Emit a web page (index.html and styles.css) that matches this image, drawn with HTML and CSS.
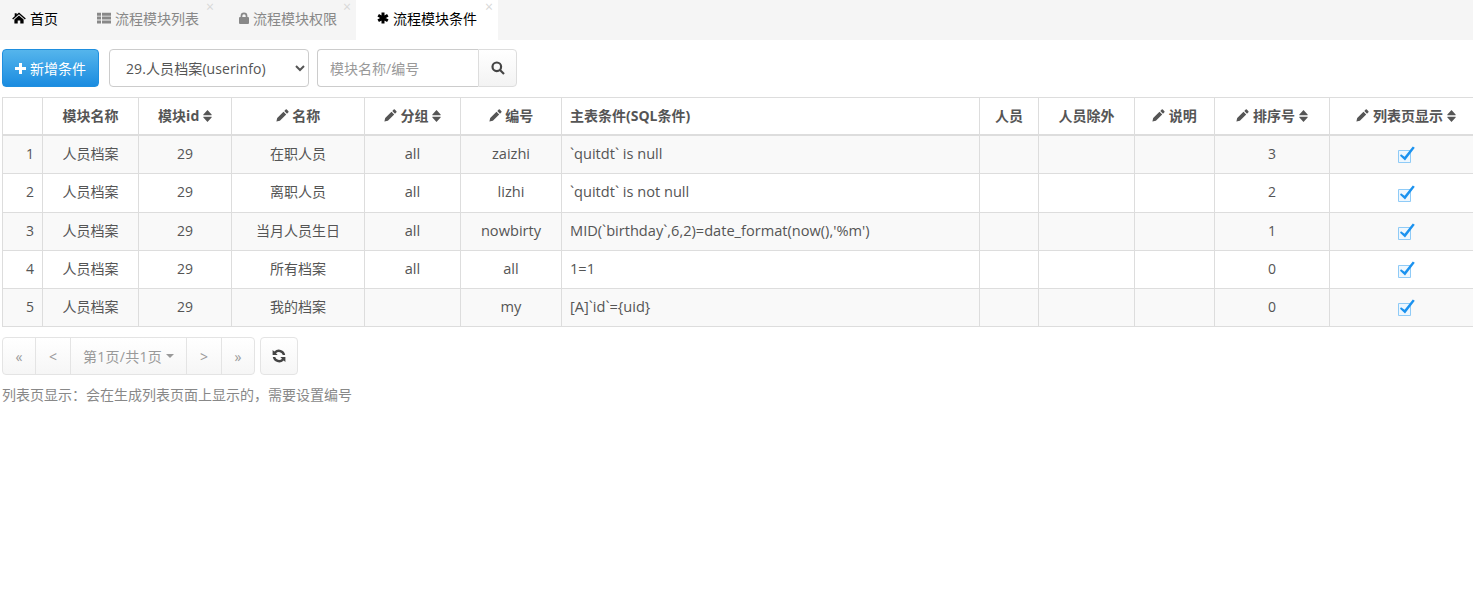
FILE: index.html
```html
<!DOCTYPE html>
<html lang="zh">
<head>
<meta charset="utf-8">
<title>流程模块条件</title>
<link rel="stylesheet" href="styles.css">
</head>
<body>
<svg class="defs" width="0" height="0" aria-hidden="true">
  <defs>
    <symbol id="i-pencil" viewBox="0 0 13 13"><path d="M9.700.6a.8.8 0 0 1 1.100 0l1.600 1.600a.8.8 0 0 1 0 1.100L11 4.700 8.300 2 9.700.6zM7.500 2.800l2.700 2.700-6.300 6.300-3.500.8.800-3.500 6.300-6.300z"/></symbol>
    <symbol id="i-sort" viewBox="0 0 9 12"><path d="M4.500 0 8.600 4.400c.3.400.1.800-.4.800H.8c-.5 0-.7-.4-.4-.8L4.500 0zM4.500 12 .4 7.600c-.3-.4-.1-.8.4-.8h7.400c.5 0 .7.400.4.800L4.500 12z"/></symbol>
    <symbol id="i-check" viewBox="0 0 18 18"><path class="box" d="M1.500 4.500h12v12h-12z"/><path class="tick" d="M4 8.200 7.600 10.800 15.800.4l2 1.400L8 14.600 3 9.800z"/></symbol>
  </defs>
</svg>

<nav class="tabs">
  <div class="tab tab-home">
    <svg class="ti" viewBox="0 0 14 12"><path d="M7 .4 13.800 6.500l-.9 1L7 2.300 1.100 7.500l-.9-1 2.500-2.200V1.200h2v1.400L7 .4zM7 3.400l4.600 4v4.200H8.300V8.400H5.700v3.200H2.400V7.400L7 3.400z"/></svg>
    <span>首页</span>
  </div>
  <div class="tab tab-muted tab-list">
    <svg class="ti" viewBox="0 0 14 12"><path d="M0 .8h4v3H0zM5 .8h9v3H5zM0 4.600h4v3H0zM5 4.600h9v3H5zM0 8.400h4v3H0zM5 8.400h9v3H5z"/></svg>
    <span>流程模块列表</span><i class="close">×</i>
  </div>
  <div class="tab tab-muted tab-lock">
    <svg class="ti ti-lock" viewBox="0 0 10 12"><path d="M5 .5a3.400 3.400 0 0 1 3.400 3.400V5H9a1 1 0 0 1 1 1v5a1 1 0 0 1-1 1H1a1 1 0 0 1-1-1V6a1 1 0 0 1 1-1h.6V3.900A3.400 3.400 0 0 1 5 .5zm0 1.700A1.700 1.700 0 0 0 3.300 3.900V5h3.400V3.900A1.700 1.700 0 0 0 5 2.200z"/></svg>
    <span>流程模块权限</span><i class="close">×</i>
  </div>
  <div class="tab tab-active">
    <svg class="ti ti-star" viewBox="0 0 12 12"><path d="M6 .5v11M1.200 3.200l9.600 5.600M10.800 3.200l-9.600 5.600"/></svg>
    <span>流程模块条件</span><i class="close">×</i>
  </div>
</nav>

<main class="content">
  <div class="toolbar">
    <button class="btn-primary" type="button">
      <svg class="plus" viewBox="0 0 11 11"><path d="M4 0h3v4h4v3H7v4H4V7H0V4h4z"/></svg>新增条件
    </button>
    <select class="select">
      <option>29.人员档案(userinfo)</option>
    </select>
    <div class="search">
      <input class="search-input" type="text" placeholder="模块名称/编号">
      <button class="search-btn" type="button" aria-label="搜索">
        <svg viewBox="0 0 14 14"><circle cx="5.800" cy="5.800" r="4.300"/><path d="m9 9 4 4"/></svg>
      </button>
    </div>
  </div>

  <div class="table-wrap">
    <table class="grid">
      <colgroup>
        <col class="c1"><col class="c2"><col class="c3"><col class="c4"><col class="c5"><col class="c6"><col class="c7"><col class="c8"><col class="c9"><col class="c10"><col class="c11"><col class="c12">
      </colgroup>
      <thead>
        <tr>
          <th></th>
          <th>模块名称</th>
          <th>模块id <svg class="sort"><use href="#i-sort"/></svg></th>
          <th><svg class="pen"><use href="#i-pencil"/></svg> 名称</th>
          <th><svg class="pen"><use href="#i-pencil"/></svg> 分组 <svg class="sort"><use href="#i-sort"/></svg></th>
          <th><svg class="pen"><use href="#i-pencil"/></svg> 编号</th>
          <th class="left">主表条件(SQL条件)</th>
          <th>人员</th>
          <th>人员除外</th>
          <th><svg class="pen"><use href="#i-pencil"/></svg> 说明</th>
          <th><svg class="pen"><use href="#i-pencil"/></svg> 排序号 <svg class="sort"><use href="#i-sort"/></svg></th>
          <th><svg class="pen"><use href="#i-pencil"/></svg> 列表页显示 <svg class="sort"><use href="#i-sort"/></svg></th>
        </tr>
      </thead>
      <tbody>
        <tr>
          <td class="num">1</td><td>人员档案</td><td>29</td><td>在职人员</td><td class="latin">all</td><td class="latin">zaizhi</td>
          <td class="left latin">`quitdt` is null</td><td></td><td></td><td></td><td>3</td>
          <td><svg class="chk"><use href="#i-check"/></svg></td>
        </tr>
        <tr>
          <td class="num">2</td><td>人员档案</td><td>29</td><td>离职人员</td><td class="latin">all</td><td class="latin">lizhi</td>
          <td class="left latin">`quitdt` is not null</td><td></td><td></td><td></td><td>2</td>
          <td><svg class="chk"><use href="#i-check"/></svg></td>
        </tr>
        <tr>
          <td class="num">3</td><td>人员档案</td><td>29</td><td>当月人员生日</td><td class="latin">all</td><td class="latin">nowbirty</td>
          <td class="left latin">MID(`birthday`,6,2)=date_format(now(),'%m')</td><td></td><td></td><td></td><td>1</td>
          <td><svg class="chk"><use href="#i-check"/></svg></td>
        </tr>
        <tr>
          <td class="num">4</td><td>人员档案</td><td>29</td><td>所有档案</td><td class="latin">all</td><td class="latin">all</td>
          <td class="left latin">1=1</td><td></td><td></td><td></td><td>0</td>
          <td><svg class="chk"><use href="#i-check"/></svg></td>
        </tr>
        <tr>
          <td class="num">5</td><td>人员档案</td><td>29</td><td>我的档案</td><td></td><td class="latin">my</td>
          <td class="left latin">[A]`id`={uid}</td><td></td><td></td><td></td><td>0</td>
          <td><svg class="chk"><use href="#i-check"/></svg></td>
        </tr>
      </tbody>
    </table>
  </div>

  <div class="pager-row">
    <div class="pager">
      <span class="pg pg-s">«</span>
      <span class="pg pg-s2">&lt;</span>
      <span class="pg pg-m">第1页/共1页 <b class="caret"></b></span>
      <span class="pg pg-s2">&gt;</span>
      <span class="pg pg-s">»</span>
    </div>
    <button class="refresh" type="button" aria-label="刷新">
      <svg viewBox="0 0 14 14"><path d="M13.200 6h-2.400A4 4 0 0 0 4 4.300L5.700 6H.6V.9l1.700 1.700A6.400 6.400 0 0 1 13.200 6zM.8 8h2.400A4 4 0 0 0 10 9.700L8.300 8h5.100v5.100l-1.700-1.700A6.400 6.400 0 0 1 .8 8z"/></svg>
    </button>
  </div>

  <p class="note">列表页显示：会在生成列表页面上显示的，需要设置编号</p>
</main>
</body>
</html>
```
FILE: styles.css
```css
* { box-sizing: border-box; }
html, body { margin: 0; padding: 0; height: 100%; overflow: hidden; background: #fff; }
body {
  font-family: "Open Sans", "Noto Sans CJK SC", sans-serif;
  font-size: 14px;
  color: #555;
}
.defs { position: absolute; }

/* tabs */
.tabs { display: flex; height: 40px; background: #f5f5f5; }
.tab {
  position: relative;
  display: flex;
  align-items: center;
  gap: 4px;
  height: 40px;
  padding-bottom: 5px;
  color: #000;
  white-space: nowrap;
}
.tab-home { width: 77px; padding-left: 12px; }
.tab-list { width: 142px; padding-left: 20px; }
.tab-lock { width: 137px; padding-left: 20px; }
.tab-active { width: 142px; padding-left: 21px; background: #fff; }
.tab-muted { color: #888; }
.ti { width: 14px; height: 12px; fill: currentColor; flex: none; }
.ti-lock { width: 10px; }
.ti-star { width: 12px; fill: none; stroke: #000; stroke-width: 3; }
.close {
  position: absolute;
  top: 0;
  right: 5px;
  font-style: normal;
  font-size: 14px;
  line-height: 14px;
  color: #d8d8d8;
}

/* toolbar */
.content { padding: 9px 0 0 2px; }
.toolbar { display: flex; align-items: center; height: 38px; }
.btn-primary {
  display: flex;
  align-items: center;
  justify-content: center;
  gap: 4px;
  width: 97px;
  height: 38px;
  padding: 0;
  border: 1px solid #1f8fdf;
  border-radius: 4px;
  background: linear-gradient(#55b5ec, #1b8ce0);
  color: #fff;
  font: inherit;
}
.plus { width: 11px; height: 11px; fill: #fff; }
.select {
  width: 200px;
  height: 38px;
  margin-left: 10px;
  padding: 0 12px;
  border: 1px solid #ccc;
  border-radius: 4px;
  background: #fff;
  color: #555;
  font: inherit;
  letter-spacing: .1px;
}
.search { display: flex; margin-left: 8px; }
.search-input {
  width: 161px;
  height: 38px;
  padding: 0 12px;
  border: 1px solid #ccc;
  border-right: 0;
  border-radius: 4px 0 0 4px;
  font: inherit;
  color: #555;
}
.search-input::placeholder { color: #999; opacity: 1; }
.search-btn {
  display: flex;
  align-items: center;
  justify-content: center;
  width: 39px;
  height: 38px;
  padding: 0;
  border: 1px solid #ddd;
  border-radius: 0 4px 4px 0;
  background: linear-gradient(#fff, #f3f3f3);
}
.search-btn svg { width: 14px; height: 14px; fill: none; stroke: #444; stroke-width: 2.200; }

/* table */
.table-wrap { margin-top: 10px; overflow: hidden; }
.grid {
  table-layout: fixed;
  width: 1480px;
  border-collapse: collapse;
  border-top: 1px solid #ddd;
  line-height: 20px;
}
.c1 { width: 40px; }
.c2 { width: 96px; }
.c3 { width: 93px; }
.c4 { width: 133px; }
.c5 { width: 96px; }
.c6 { width: 101px; }
.c7 { width: 418px; }
.c8 { width: 59px; }
.c9 { width: 96px; }
.c10 { width: 80px; }
.c11 { width: 115px; }
.c12 { width: 153px; }
.grid th, .grid td {
  padding: 0 8px;
  border: 1px solid #ddd;
  text-align: center;
  white-space: nowrap;
}
.grid th { height: 37px; border-bottom-width: 2px; font-weight: 700; color: #555; }
.grid td { height: 38px; }
.grid tbody tr:nth-child(-n+2) td { height: 39px; }
.grid .left { text-align: left; }
.grid .num { text-align: right; }
.grid .latin { font-size: 14.600px; padding-bottom: 2px; }
.grid tbody tr:nth-child(n+2) td { padding-bottom: 2px; }
.grid tbody tr:nth-child(n+2) td.latin { padding-bottom: 4px; }
.grid tbody tr:nth-child(2) td:last-child { padding-bottom: 0; }
.grid tbody tr:nth-child(odd) { background: #f9f9f9; }
.pen { width: 13px; height: 13px; fill: #555; vertical-align: -1px; }
.sort { width: 9px; height: 12px; fill: #555; vertical-align: -1px; }
.chk { width: 18px; height: 18px; vertical-align: -5px; overflow: visible; }
.box { fill: #eef7fe; stroke: #8fcbf7; stroke-width: 1; }
.tick { fill: #1b92ef; }

/* pager */
.pager-row { display: flex; gap: 5px; margin-top: 10px; }
.pager {
  display: flex;
  height: 38px;
  border: 1px solid #e4e4e4;
  border-radius: 4px;
  background: linear-gradient(#fff, #f6f6f6);
  color: #999;
}
.pg { display: flex; align-items: center; justify-content: center; border-left: 1px solid #e4e4e4; }
.pg:first-child { border-left: 0; width: 32px; }
.pg-s { width: 33px; }
.pg-s2 { width: 35px; }
.pg-m { width: 116px; gap: 4px; letter-spacing: .3px; }
.caret { width: 0; height: 0; border: 4px solid transparent; border-top-color: #999; border-bottom: 0; }
.refresh {
  display: flex;
  align-items: center;
  justify-content: center;
  width: 38px;
  height: 38px;
  padding: 0;
  border: 1px solid #e4e4e4;
  border-radius: 4px;
  background: linear-gradient(#fff, #f6f6f6);
}
.refresh svg { width: 14px; height: 14px; fill: #444; }
.note { margin: 10px 0 0; line-height: 20px; color: #888; font-size: 14px; }
```
